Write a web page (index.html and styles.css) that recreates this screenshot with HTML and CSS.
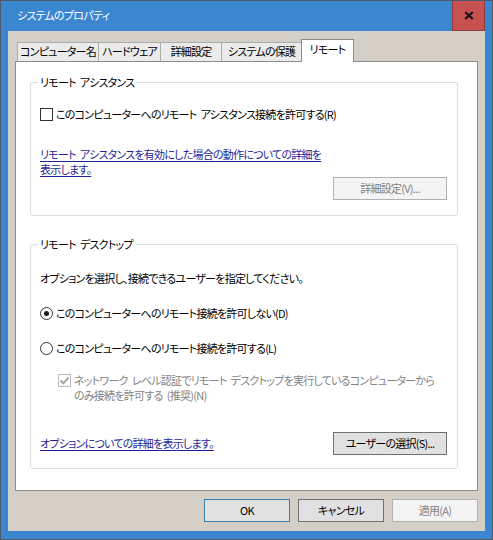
FILE: index.html
```html
<!DOCTYPE html>
<html lang="ja">
<head>
<meta charset="utf-8">
<title>システムのプロパティ</title>
<link rel="stylesheet" href="styles.css">
</head>
<body>
<div class="window">
  <div class="titlebar">
    <span class="title">システムのプロパティ</span>
    <div class="close">
      <svg width="10" height="9" viewBox="0 0 10 9"><path d="M1.2 1 L8.8 8 M8.8 1 L1.2 8" stroke="#141414" stroke-width="2.1" fill="none"/></svg>
    </div>
  </div>
  <div class="client">
    <div class="tabs">
      <div class="tab tab-name">コンピューター名</div>
      <div class="tab tab-hw">ハードウェア</div>
      <div class="tab tab-adv">詳細設定</div>
      <div class="tab tab-prot">システムの保護</div>
      <div class="tab tab-remote active">リモート</div>
    </div>
    <div class="panel">
      <fieldset class="group group-assist">
        <legend>リモート アシスタンス</legend>
        <div class="option first">
          <span class="checkbox"></span>
          <span>このコンピューターへのリモート アシスタンス接続を許可する(R)</span>
        </div>
        <a class="link assist-link" href="#">リモート アシスタンスを有効にした場合の動作についての詳細を<br>表示します。</a>
        <div class="btn-row">
          <button class="btn btn-wide disabled">詳細設定(V)...</button>
        </div>
      </fieldset>

      <fieldset class="group group-desktop">
        <legend>リモート デスクトップ</legend>
        <div class="instruction">オプションを選択し、接続できるユーザーを指定してください。</div>
        <div class="option radio-row">
          <span class="radio checked"></span>
          <span>このコンピューターへのリモート接続を許可しない(D)</span>
        </div>
        <div class="option radio-row">
          <span class="radio"></span>
          <span>このコンピューターへのリモート接続を許可する(L)</span>
        </div>
        <div class="option nla">
          <span class="checkbox disabled-check">
            <svg width="11" height="11" viewBox="0 0 11 11"><path d="M1.5 5.5 L4.3 8.3 L9.6 2.4" stroke="#a3a3a3" stroke-width="2" fill="none"/></svg>
          </span>
          <span class="nla-text">ネットワーク レベル認証でリモート デスクトップを実行しているコンピューターから<br>のみ接続を許可する (推奨)(N)</span>
        </div>
        <div class="bottom-row">
          <a class="link" href="#">オプションについての詳細を表示します。</a>
          <button class="btn btn-wide">ユーザーの選択(S)...</button>
        </div>
      </fieldset>
    </div>
    <div class="footer">
      <button class="btn default">OK</button>
      <button class="btn">キャンセル</button>
      <button class="btn disabled">適用(A)</button>
    </div>
  </div>
</div>
</body>
</html>
```
FILE: styles.css
```css
* {
  box-sizing: border-box;
}

html, body {
  margin: 0;
  padding: 0;
}

body {
  font-family: "Noto Sans CJK JP", "Noto Sans", sans-serif;
  font-size: 11px;
  letter-spacing: -0.75px;
  word-spacing: 2.5px;
  line-height: 15px;
  font-feature-settings: "palt";
  color: #000;
  background: #3b86d1;
}

.window {
  width: 493px;
  height: 540px;
  border: 1px solid #4e5a66;
  background: #3b86d1;
  padding: 0 7px 0 7px;
  display: flex;
  flex-direction: column;
}

.titlebar {
  height: 30px;
  display: flex;
  align-items: center;
  justify-content: space-between;
}

.title {
  color: #fff;
  padding-left: 9px;
  padding-bottom: 1px;
}

.close {
  width: 33px;
  height: 30px;
  background: #c75050;
  border: 1px solid #8f3c3c;
  border-top: none;
  display: flex;
  align-items: center;
  justify-content: center;
  padding-bottom: 1px;
}

.client {
  height: 500px;
  background: #d4d0c8;
  display: flex;
  flex-direction: column;
}

.tabs {
  display: flex;
  align-items: flex-end;
  height: 23px;
  margin-top: 8px;
  margin-bottom: -1px;
  padding-left: 9px;
  position: relative;
  z-index: 1;
}

.tab {
  height: 20px;
  background: #ebebeb;
  border: 1px solid #acacac;
  border-bottom-color: #8c8c8c;
  text-align: center;
  line-height: 16px;
  white-space: nowrap;
  margin-left: -1px;
}

.tab:first-child {
  margin-left: 0;
}

.tab-name { width: 82px; }
.tab-hw { width: 63px; }
.tab-adv { width: 62px; }
.tab-prot { width: 81px; }
.tab-remote { width: 53px; }

.tab.active {
  height: 23px;
  background: #fff;
  border-color: #8c8c8c;
  border-bottom: none;
  padding-top: 1px;
  position: relative;
}

.panel {
  margin: 0 7px;
  background: #fff;
  border: 1px solid #8c8c8c;
  padding: 13px 19px 21px 14px;
}

.group {
  margin: 0;
  border: 1px solid #d5dfe5;
  border-radius: 3px;
  padding: 0 10px 15px 9px;
  min-width: 0;
}

.group legend {
  padding: 0 2px;
  margin-left: -2px;
  line-height: 15px;
}

.group-desktop {
  margin-top: 21px;
  padding-bottom: 13px;
}

.option {
  display: flex;
  align-items: center;
  white-space: nowrap;
}

.option.first {
  margin-top: 17px;
}

.checkbox {
  width: 13px;
  height: 13px;
  border: 1px solid #333;
  background: #fff;
  margin-right: 3px;
  flex: none;
  display: flex;
  align-items: center;
  justify-content: center;
}

.radio {
  width: 13px;
  height: 13px;
  border: 1px solid #333;
  border-radius: 50%;
  background: #fff;
  margin-right: 3px;
  flex: none;
  display: flex;
  align-items: center;
  justify-content: center;
}

.radio.checked::after {
  content: "";
  width: 5px;
  height: 5px;
  border-radius: 50%;
  background: #1a1a1a;
}

.link {
  color: #1f1f99;
  text-decoration: underline;
  text-underline-offset: 2px;
  white-space: nowrap;
}

.assist-link {
  display: block;
  margin-top: 25px;
}

.btn-row {
  display: flex;
  justify-content: flex-end;
}

.btn {
  font-family: inherit;
  font-size: 11px;
  letter-spacing: -0.75px;
  font-feature-settings: "palt";
  line-height: 15px;
  height: 23px;
  width: 86px;
  padding: 0 0 1px;
  background: #e1e1e1;
  border: 1px solid #707070;
  color: #000;
  white-space: nowrap;
}

.btn-wide {
  width: 114px;
}

.btn.disabled {
  background: #f4f4f4;
  border-color: #adb2b5;
  color: #838383;
}

.btn.default {
  border-color: #3c7fb1;
}

.instruction {
  margin-top: 19px;
}

.radio-row {
  margin-top: 20px;
}

.nla {
  margin-top: 17px;
  margin-left: 18px;
  align-items: flex-start;
  color: #838383;
}

.disabled-check {
  margin-top: 1px;
  border-color: #bcbcbc;
  background: #fff;
}

.bottom-row {
  margin-top: 29px;
  display: flex;
  align-items: center;
  justify-content: space-between;
}

.footer {
  display: flex;
  justify-content: flex-end;
  gap: 8px;
  padding: 8px 7px 0 0;
}
```
